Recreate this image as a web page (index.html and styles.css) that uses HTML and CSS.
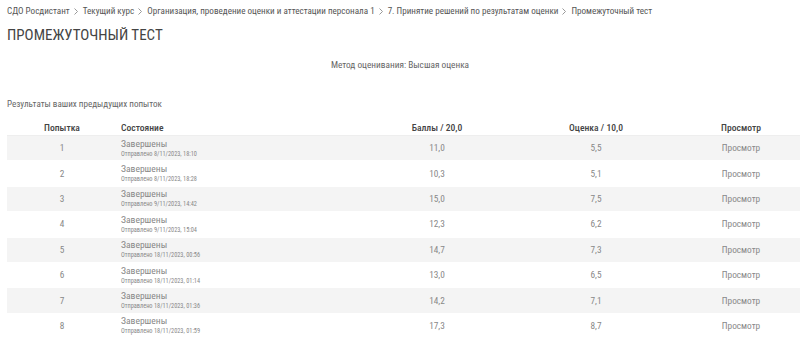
FILE: index.html
```html
<!DOCTYPE html>
<html lang="ru">
<head>
    <meta charset="UTF-8">
    <title>Промежуточный тест</title>
    <link rel="stylesheet" href="styles.css">
</head>
<body>

    <div class="breadcrumb">
        <span>СДО Росдистант</span>
        <svg class="sep" viewBox="0 0 4 7"><path d="M0.5 0.5 L3.5 3.5 L0.5 6.5"/></svg>
        <span>Текущий курс</span>
        <svg class="sep" viewBox="0 0 4 7"><path d="M0.5 0.5 L3.5 3.5 L0.5 6.5"/></svg>
        <span>Организация, проведение оценки и аттестации персонала 1</span>
        <svg class="sep" viewBox="0 0 4 7"><path d="M0.5 0.5 L3.5 3.5 L0.5 6.5"/></svg>
        <span>7. Принятие решений по результатам оценки</span>
        <svg class="sep" viewBox="0 0 4 7"><path d="M0.5 0.5 L3.5 3.5 L0.5 6.5"/></svg>
        <span>Промежуточный тест</span>
    </div>

    <h1>ПРОМЕЖУТОЧНЫЙ ТЕСТ</h1>

    <p class="method">Метод оценивания: Высшая оценка</p>

    <h3>Результаты ваших предыдущих попыток</h3>

    <table class="attempts">
        <thead>
            <tr>
                <th class="c-num">Попытка</th>
                <th class="c-state">Состояние</th>
                <th class="c-score">Баллы / 20,0</th>
                <th class="c-grade">Оценка / 10,0</th>
                <th class="c-view">Просмотр</th>
            </tr>
        </thead>
        <tbody>
            <tr>
                <td class="c-num">1</td>
                <td class="c-state">Завершены<span class="sub">Отправлено 8/11/2023, 18:10</span></td>
                <td class="c-score">11,0</td>
                <td class="c-grade">5,5</td>
                <td class="c-view">Просмотр</td>
            </tr>
            <tr>
                <td class="c-num">2</td>
                <td class="c-state">Завершены<span class="sub">Отправлено 8/11/2023, 18:28</span></td>
                <td class="c-score">10,3</td>
                <td class="c-grade">5,1</td>
                <td class="c-view">Просмотр</td>
            </tr>
            <tr>
                <td class="c-num">3</td>
                <td class="c-state">Завершены<span class="sub">Отправлено 9/11/2023, 14:42</span></td>
                <td class="c-score">15,0</td>
                <td class="c-grade">7,5</td>
                <td class="c-view">Просмотр</td>
            </tr>
            <tr>
                <td class="c-num">4</td>
                <td class="c-state">Завершены<span class="sub">Отправлено 9/11/2023, 15:04</span></td>
                <td class="c-score">12,3</td>
                <td class="c-grade">6,2</td>
                <td class="c-view">Просмотр</td>
            </tr>
            <tr>
                <td class="c-num">5</td>
                <td class="c-state">Завершены<span class="sub">Отправлено 18/11/2023, 00:56</span></td>
                <td class="c-score">14,7</td>
                <td class="c-grade">7,3</td>
                <td class="c-view">Просмотр</td>
            </tr>
            <tr>
                <td class="c-num">6</td>
                <td class="c-state">Завершены<span class="sub">Отправлено 18/11/2023, 01:14</span></td>
                <td class="c-score">13,0</td>
                <td class="c-grade">6,5</td>
                <td class="c-view">Просмотр</td>
            </tr>
            <tr>
                <td class="c-num">7</td>
                <td class="c-state">Завершены<span class="sub">Отправлено 18/11/2023, 01:36</span></td>
                <td class="c-score">14,2</td>
                <td class="c-grade">7,1</td>
                <td class="c-view">Просмотр</td>
            </tr>
            <tr>
                <td class="c-num">8</td>
                <td class="c-state">Завершены<span class="sub">Отправлено 18/11/2023, 01:59</span></td>
                <td class="c-score">17,3</td>
                <td class="c-grade">8,7</td>
                <td class="c-view">Просмотр</td>
            </tr>
        </tbody>
    </table>

</body>
</html>
```

FILE: styles.css
```css
body {
    font-family: Roboto, "Noto Sans", sans-serif;
    font-stretch: 75%;
    background-color: #fff;
    color: #666;
    margin: 0;
    padding: 4px 7px 0 7px;
    overflow: hidden;
}

.breadcrumb {
    font-size: 9.1px;
    color: #555;
    height: 14px;
    white-space: nowrap;
    display: flex;
    align-items: center;
}

.breadcrumb .sep {
    width: 4px;
    height: 7px;
    margin: 0 5px 0 4px;
    fill: none;
    stroke: #999;
    stroke-width: 1;
}

h1 {
    font-size: 15px;
    font-weight: 400;
    color: #444;
    margin: 7px 0 0 0;
    line-height: 20px;
}

.method {
    font-size: 9.3px;
    text-align: center;
    color: #666;
    margin: 14px 0 0 0;
    line-height: 12px;
}

h3 {
    font-size: 9.1px;
    font-weight: 400;
    color: #666;
    margin: 27px 0 0 0;
    line-height: 12px;
}

.attempts {
    width: 791px;
    border-collapse: collapse;
    margin-top: 10px;
    font-size: 9.3px;
    table-layout: fixed;
}

.attempts th {
    font-size: 9.6px;
    font-weight: 500;
    color: #444;
    height: 15px;
    padding: 0;
    border-bottom: 1px solid #eee;
}

.attempts td {
    height: 24.4px;
    padding: 0;
    border-bottom: 1px solid #fff;
    color: #888;
    line-height: 12px;
}

.attempts tbody tr:nth-child(odd) td {
    background-color: #f4f4f4;
}

.c-num { width: 110px; text-align: center; }
.c-state { width: 241px; text-align: left; padding-left: 4px !important; }
.c-score { width: 150px; text-align: center; }
.c-grade { width: 168px; text-align: center; }
.c-view { width: 122px; text-align: center; }

.attempts td.c-state {
    font-size: 9.6px;
    line-height: 12px;
}

.sub {
    display: block;
    font-size: 6.3px;
    line-height: 9px;
    color: #888;
}
```
